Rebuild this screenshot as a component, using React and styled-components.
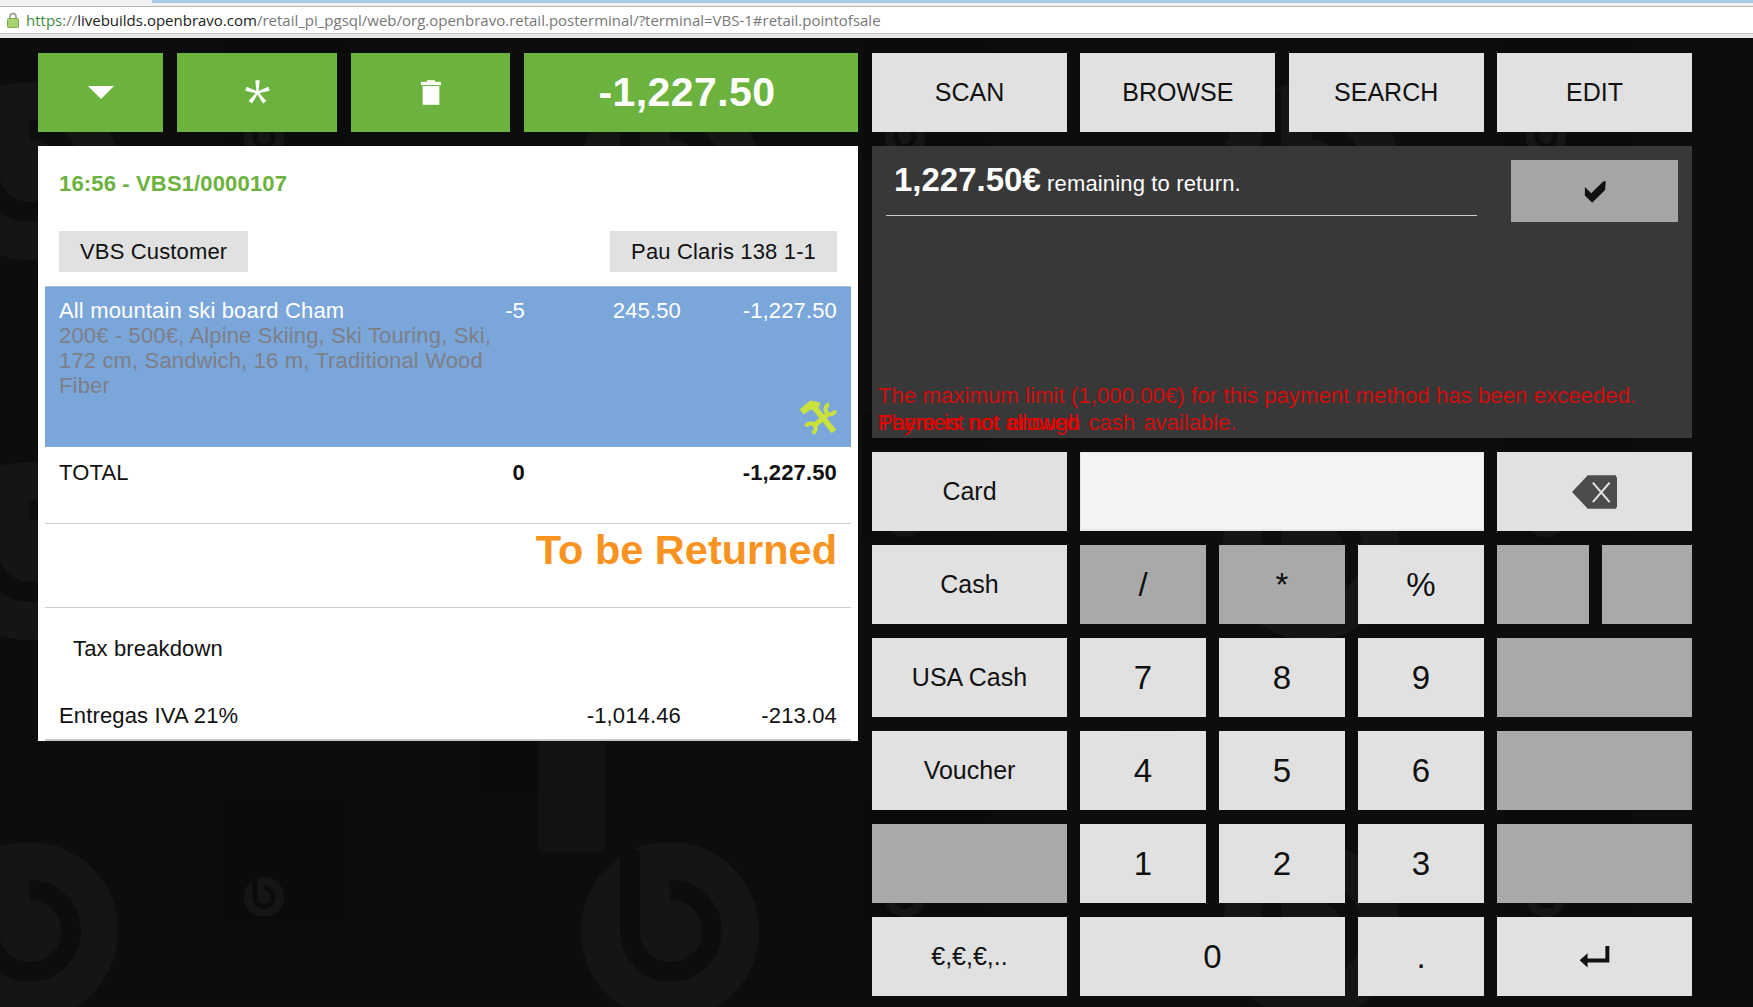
import React from "react";
import styled, { createGlobalStyle } from "styled-components";

const GlobalStyle = createGlobalStyle`
  html, body {
    margin: 0;
    padding: 0;
    height: 100%;
    overflow: hidden;
    background: #0d0d0d;
  }
  body {
    font-family: "Liberation Sans", Arial, sans-serif;
  }
`;

const keypadRows = [
  [{ label: "Cash" }, { label: "/", muted: true }, { label: "*", muted: true }, { label: "%" }, { muted: true }, { muted: true }],
  [{ label: "USA Cash" }, { label: "7" }, { label: "8" }, { label: "9" }, { muted: true, span: 2 }],
  [{ label: "Voucher" }, { label: "4" }, { label: "5" }, { label: "6" }, { muted: true, span: 2 }],
  [{ muted: true }, { label: "1" }, { label: "2" }, { label: "3" }, { muted: true, span: 2 }],
];

const Watermark = () => (
  <Backdrop width="1753" height="1007" aria-hidden="true">
    <defs>
      <pattern id="tile" x="-100" y="60" width="641" height="380" patternUnits="userSpaceOnUse">
        <rect x="322" y="353" width="128" height="27" fill="#0b0b0b" />
        <rect x="322" y="0" width="128" height="102" fill="#0b0b0b" />
        <rect x="580" y="290" width="58" height="63" fill="#0a0a0a" />
        <circle cx="129" cy="111" r="89" fill="#151515" />
        <path d="M89 30 V111 A41 41 0 1 0 129 70" fill="none" stroke="#0d0d0d" strokeWidth="20" />
        <circle cx="364" cy="77" r="20" fill="#151515" />
        <path d="M355 59 V77 A9 9 0 1 0 364 68" fill="none" stroke="#0b0b0b" strokeWidth="5" />
      </pattern>
    </defs>
    <rect width="1753" height="1007" fill="url(#tile)" />
    <rect x="538" y="742" width="67" height="110" fill="#121212" />
  </Backdrop>
);

const LockIcon = () => (
  <svg width="12" height="16" viewBox="0 0 12 16">
    <path d="M3 7 V4.5 A3 3 0 0 1 9 4.5 V7" fill="none" stroke="#8f9a88" strokeWidth="1.6" />
    <rect x="0.5" y="6.5" width="11" height="9" rx="1" fill="#a5d36d" stroke="#7fa650" />
  </svg>
);

const CaretIcon = () => (
  <svg width="26" height="13" viewBox="0 0 26 13">
    <polygon points="0,0 26,0 13,13" fill="#fff" />
  </svg>
);

const StarIcon = () => (
  <svg width="25" height="25" viewBox="-38 -38 76 76">
    {[0, 72, 144, 216, 288].map((angle) => (
      <polygon key={angle} points="-3,0 3,0 6.5,-37 -6.5,-37" fill="#fff" transform={`rotate(${angle})`} />
    ))}
  </svg>
);

const TrashIcon = () => (
  <svg width="20" height="25" viewBox="0 0 61 75">
    <rect x="18" y="0" width="25" height="8" fill="#fff" />
    <rect x="0" y="5" width="61" height="10" fill="#fff" />
    <rect x="5" y="18" width="51" height="57" fill="#fff" />
  </svg>
);

const ToolsIcon = () => (
  <svg width="38" height="36" viewBox="28 28 114 107">
    <g fill="none" stroke="#c9e23c">
      <line x1="72" y1="50" x2="133" y2="125" strokeWidth="17" />
      <line x1="118" y1="70" x2="70" y2="110" strokeWidth="15" />
      <path d="M118 44 A15 15 0 1 0 137 62" strokeWidth="12" />
      <path d="M49 110 A15 15 0 1 1 68 130" strokeWidth="12" />
    </g>
    <polygon points="30,58 62,32 92,38 84,64 62,60 42,74" fill="#c9e23c" />
  </svg>
);

const CheckIcon = () => (
  <svg width="24" height="24" viewBox="66 40 76 76">
    <polygon points="72,65 92,85 130,48 138,46 136,75 95,115 72,92" fill="#111" />
  </svg>
);

const BackspaceIcon = () => (
  <svg width="45" height="34" viewBox="38 28 134 100">
    <polygon points="38,78 85,28 168,28 172,36 172,122 168,128 85,128" fill="#4c4c4c" />
    <g stroke="#e4e4e4" strokeWidth="6">
      <line x1="100" y1="50" x2="150" y2="108" />
      <line x1="150" y1="50" x2="100" y2="108" />
    </g>
  </svg>
);

const EnterIcon = () => (
  <svg width="31" height="23" viewBox="38 28 94 68">
    <path d="M118 30 H130 V80 H64 V95 L40 73 L64 52 V68 H118 Z" fill="#111" />
  </svg>
);

const App = () => {
  return (
    <Page>
      <GlobalStyle />
      <Watermark />

      <BrowserBar>
        <TabStrip>
          <TabEdge />
        </TabStrip>
        <AddressBar>
          <LockIcon />
          <Url>
            <UrlScheme>https</UrlScheme>://
            <UrlHost>livebuilds.openbravo.com</UrlHost>
            /retail_pi_pgsql/web/org.openbravo.retail.posterminal/?terminal=VBS-1#retail.pointofsale
          </Url>
        </AddressBar>
      </BrowserBar>

      <Main>
        <Column>
          <Toolbar>
            <GreenButton>
              <CaretIcon />
            </GreenButton>
            <GreenButton>
              <StarIcon />
            </GreenButton>
            <GreenButton>
              <TrashIcon />
            </GreenButton>
            <TotalButton>-1,227.50</TotalButton>
          </Toolbar>

          <Receipt>
            <OrderTitle>16:56 - VBS1/0000107</OrderTitle>
            <CustomerRow>
              <Chip>VBS Customer</Chip>
              <Chip>Pau Claris 138 1-1</Chip>
            </CustomerRow>

            <SelectedLine>
              <div>
                All mountain ski board Cham
                <LineDetail>
                  200€ - 500€, Alpine Skiing, Ski Touring, Ski, 172 cm, Sandwich, 16 m, Traditional Wood Fiber
                </LineDetail>
              </div>
              <Num>-5</Num>
              <Num>245.50</Num>
              <LastCell>
                <Num>-1,227.50</Num>
                <ToolsIcon />
              </LastCell>
            </SelectedLine>

            <TotalRow>
              <div>TOTAL</div>
              <Num $bold>0</Num>
              <div />
              <Num $bold>-1,227.50</Num>
            </TotalRow>

            <ReturnNote>To be Returned</ReturnNote>

            <TaxTitle>Tax breakdown</TaxTitle>
            <TaxRow>
              <div>Entregas IVA 21%</div>
              <div />
              <Num>-1,014.46</Num>
              <Num>-213.04</Num>
            </TaxRow>
          </Receipt>
        </Column>

        <Column>
          <TabRow>
            <KeyButton>SCAN</KeyButton>
            <KeyButton>BROWSE</KeyButton>
            <KeyButton>SEARCH</KeyButton>
            <KeyButton>EDIT</KeyButton>
          </TabRow>

          <PaymentPanel>
            <PaymentTop>
              <Remaining>
                <RemainingAmount>1,227.50€</RemainingAmount> remaining to return.
              </Remaining>
              <DoneButton>
                <CheckIcon />
              </DoneButton>
            </PaymentTop>
            <Messages>
              <Message>The maximum limit (1,000.00€) for this payment method has been exceeded.</Message>
              <MessageStack>
                <BackMessage>There is not enough cash available.</BackMessage>
                <FrontMessage>Payment not allowed</FrontMessage>
              </MessageStack>
            </Messages>
          </PaymentPanel>

          <Keypad>
            <KeyButton>Card</KeyButton>
            <AmountInput />
            <KeyButton $span={2}>
              <BackspaceIcon />
            </KeyButton>

            {keypadRows.flat().map((key, i) => (
              <KeyButton key={i} $muted={key.muted} $span={key.span} $digit={key.label && key.label.length === 1}>
                {key.label}
              </KeyButton>
            ))}

            <KeyButton>€,€,€,..</KeyButton>
            <KeyButton $span={2} $digit>
              0
            </KeyButton>
            <KeyButton $digit>.</KeyButton>
            <KeyButton $span={2}>
              <EnterIcon />
            </KeyButton>
          </Keypad>
        </Column>
      </Main>
    </Page>
  );
};

export default App;

const Page = styled.div`
  position: relative;
  width: 1753px;
  height: 1007px;
  overflow: hidden;
`;

const Backdrop = styled.svg`
  position: absolute;
  top: 0;
  left: 0;
`;

const BrowserBar = styled.div`
  position: relative;
  height: 38px;
  background: #e6e6e6;
`;

const TabStrip = styled.div`
  height: 7px;
  background: #f1f1f1;
  border-bottom: 1px solid #b5b5b5;
  box-sizing: border-box;
  padding-left: 152px;
`;

const TabEdge = styled.div`
  height: 3px;
  background: #a9cbe6;
`;

const AddressBar = styled.div`
  height: 27px;
  box-sizing: border-box;
  padding-left: 7px;
  display: flex;
  align-items: center;
  gap: 7px;
  background: #fff;
  border-bottom: 1px solid #c4c4c4;
`;

const Url = styled.div`
  font-family: "Open Sans", sans-serif;
  font-size: 15px;
  color: #777;
  white-space: nowrap;
`;

const UrlScheme = styled.span`
  color: #3c8a3c;
`;

const UrlHost = styled.span`
  color: #222;
`;

const Main = styled.div`
  position: relative;
  display: grid;
  grid-template-columns: 820px 820px;
  column-gap: 14px;
  padding: 15px 0 0 38px;
`;

const Column = styled.div`
  display: flex;
  flex-direction: column;
  gap: 14px;
  align-items: stretch;
`;

const Toolbar = styled.div`
  display: grid;
  grid-template-columns: 125px 160px 159px 334px;
  column-gap: 14px;
  height: 79px;
`;

const GreenButton = styled.div`
  display: flex;
  align-items: center;
  justify-content: center;
  background: #6cb23e;
`;

const TotalButton = styled(GreenButton)`
  padding-right: 8px;
  font-size: 41px;
  font-weight: bold;
  letter-spacing: 0.4px;
  color: #fff;
`;

const Receipt = styled.div`
  height: 595px;
  background: #fff;
  color: #111;
  font-size: 22px;
  line-height: 26px;
  letter-spacing: 0.15px;
`;

const OrderTitle = styled.div`
  height: 85px;
  box-sizing: border-box;
  padding: 25px 0 0 21px;
  font-weight: bold;
  color: #6cb23e;
`;

const CustomerRow = styled.div`
  display: flex;
  justify-content: space-between;
  margin: 0 21px 14px;
`;

const Chip = styled.div`
  height: 41px;
  display: flex;
  align-items: center;
  padding: 0 21px;
  background: #e1e1e1;
`;

const LineGrid = styled.div`
  display: grid;
  grid-template-columns: 435px 31px 156px 156px;
  margin: 0 7px;
  padding: 0 14px;
  box-sizing: border-box;
`;

const SelectedLine = styled(LineGrid)`
  height: 161px;
  padding-top: 11px;
  padding-bottom: 12px;
  background: #7ba6da;
  border-top: 1px solid #a3bfdc;
  color: #fff;
  line-height: 25px;
`;

const LineDetail = styled.div`
  color: #7d7f88;
`;

const LastCell = styled.div`
  display: flex;
  flex-direction: column;
  align-items: flex-end;
  justify-content: space-between;
`;

const Num = styled.div`
  text-align: right;
  font-weight: ${(p) => (p.$bold ? "bold" : "normal")};
`;

const TotalRow = styled(LineGrid)`
  height: 77px;
  padding-top: 13px;
  border-bottom: 1px solid #cfcfcf;
`;

const ReturnNote = styled.div`
  height: 84px;
  box-sizing: border-box;
  margin: 0 7px;
  padding: 3px 14px 0 0;
  text-align: right;
  font-size: 41.5px;
  line-height: 46px;
  font-weight: bold;
  letter-spacing: 0;
  color: #f7931e;
  border-bottom: 1px solid #cfcfcf;
`;

const TaxTitle = styled.div`
  height: 53px;
  box-sizing: border-box;
  padding: 28px 0 0 35px;
`;

const TaxRow = styled(LineGrid)`
  height: 80px;
  padding-top: 42px;
  border-bottom: 2px solid #c8c8c8;
`;

const TabRow = styled.div`
  display: grid;
  grid-template-columns: repeat(4, 195px);
  column-gap: 13.33px;
  height: 79px;
`;

const KeyButton = styled.div`
  grid-column: span ${(p) => p.$span || 1};
  display: flex;
  align-items: center;
  justify-content: center;
  background: ${(p) => (p.$muted ? "#a9a9a9" : "#e1e1e1")};
  color: #111;
  font-size: ${(p) => (p.$digit ? "33px" : "25px")};
`;

const PaymentPanel = styled.div`
  height: 292px;
  display: flex;
  flex-direction: column;
  justify-content: space-between;
  background: #383838;
`;

const PaymentTop = styled.div`
  display: flex;
  justify-content: space-between;
  padding: 14px 14px 0;
`;

const Remaining = styled.div`
  width: 591px;
  height: 56px;
  box-sizing: border-box;
  padding-left: 8px;
  border-bottom: 1px solid #ccc;
  color: #fff;
  font-size: 22px;
  line-height: 40px;
  letter-spacing: 0.15px;
`;

const RemainingAmount = styled.span`
  font-size: 33px;
  font-weight: bold;
  letter-spacing: 0;
`;

const DoneButton = styled.div`
  width: 167px;
  height: 62px;
  display: flex;
  align-items: center;
  justify-content: center;
  background: #a5a5a5;
`;

const Messages = styled.div`
  padding: 0 0 2px 6px;
`;

const Message = styled.div`
  color: #d40c0c;
  font-size: 22px;
  line-height: 27px;
  letter-spacing: 0.12px;
`;

const MessageStack = styled.div`
  display: grid;
`;

/* the reference really prints these two messages on top of each other */
const BackMessage = styled(Message)`
  grid-area: 1 / 1;
  letter-spacing: 0;
  word-spacing: 2.2px;
`;

const FrontMessage = styled(Message)`
  grid-area: 1 / 1;
  color: #e60000;
  letter-spacing: -0.2px;
`;

const Keypad = styled.div`
  display: grid;
  grid-template-columns: 195px 126px 126px 126px 91.5px 90.5px;
  grid-auto-rows: 79px;
  gap: 14px 13px;
`;

const AmountInput = styled.div`
  grid-column: span 3;
  background: #f4f4f4;
  border: 1px solid #e8e8e8;
  border-bottom-width: 2px;
`;
